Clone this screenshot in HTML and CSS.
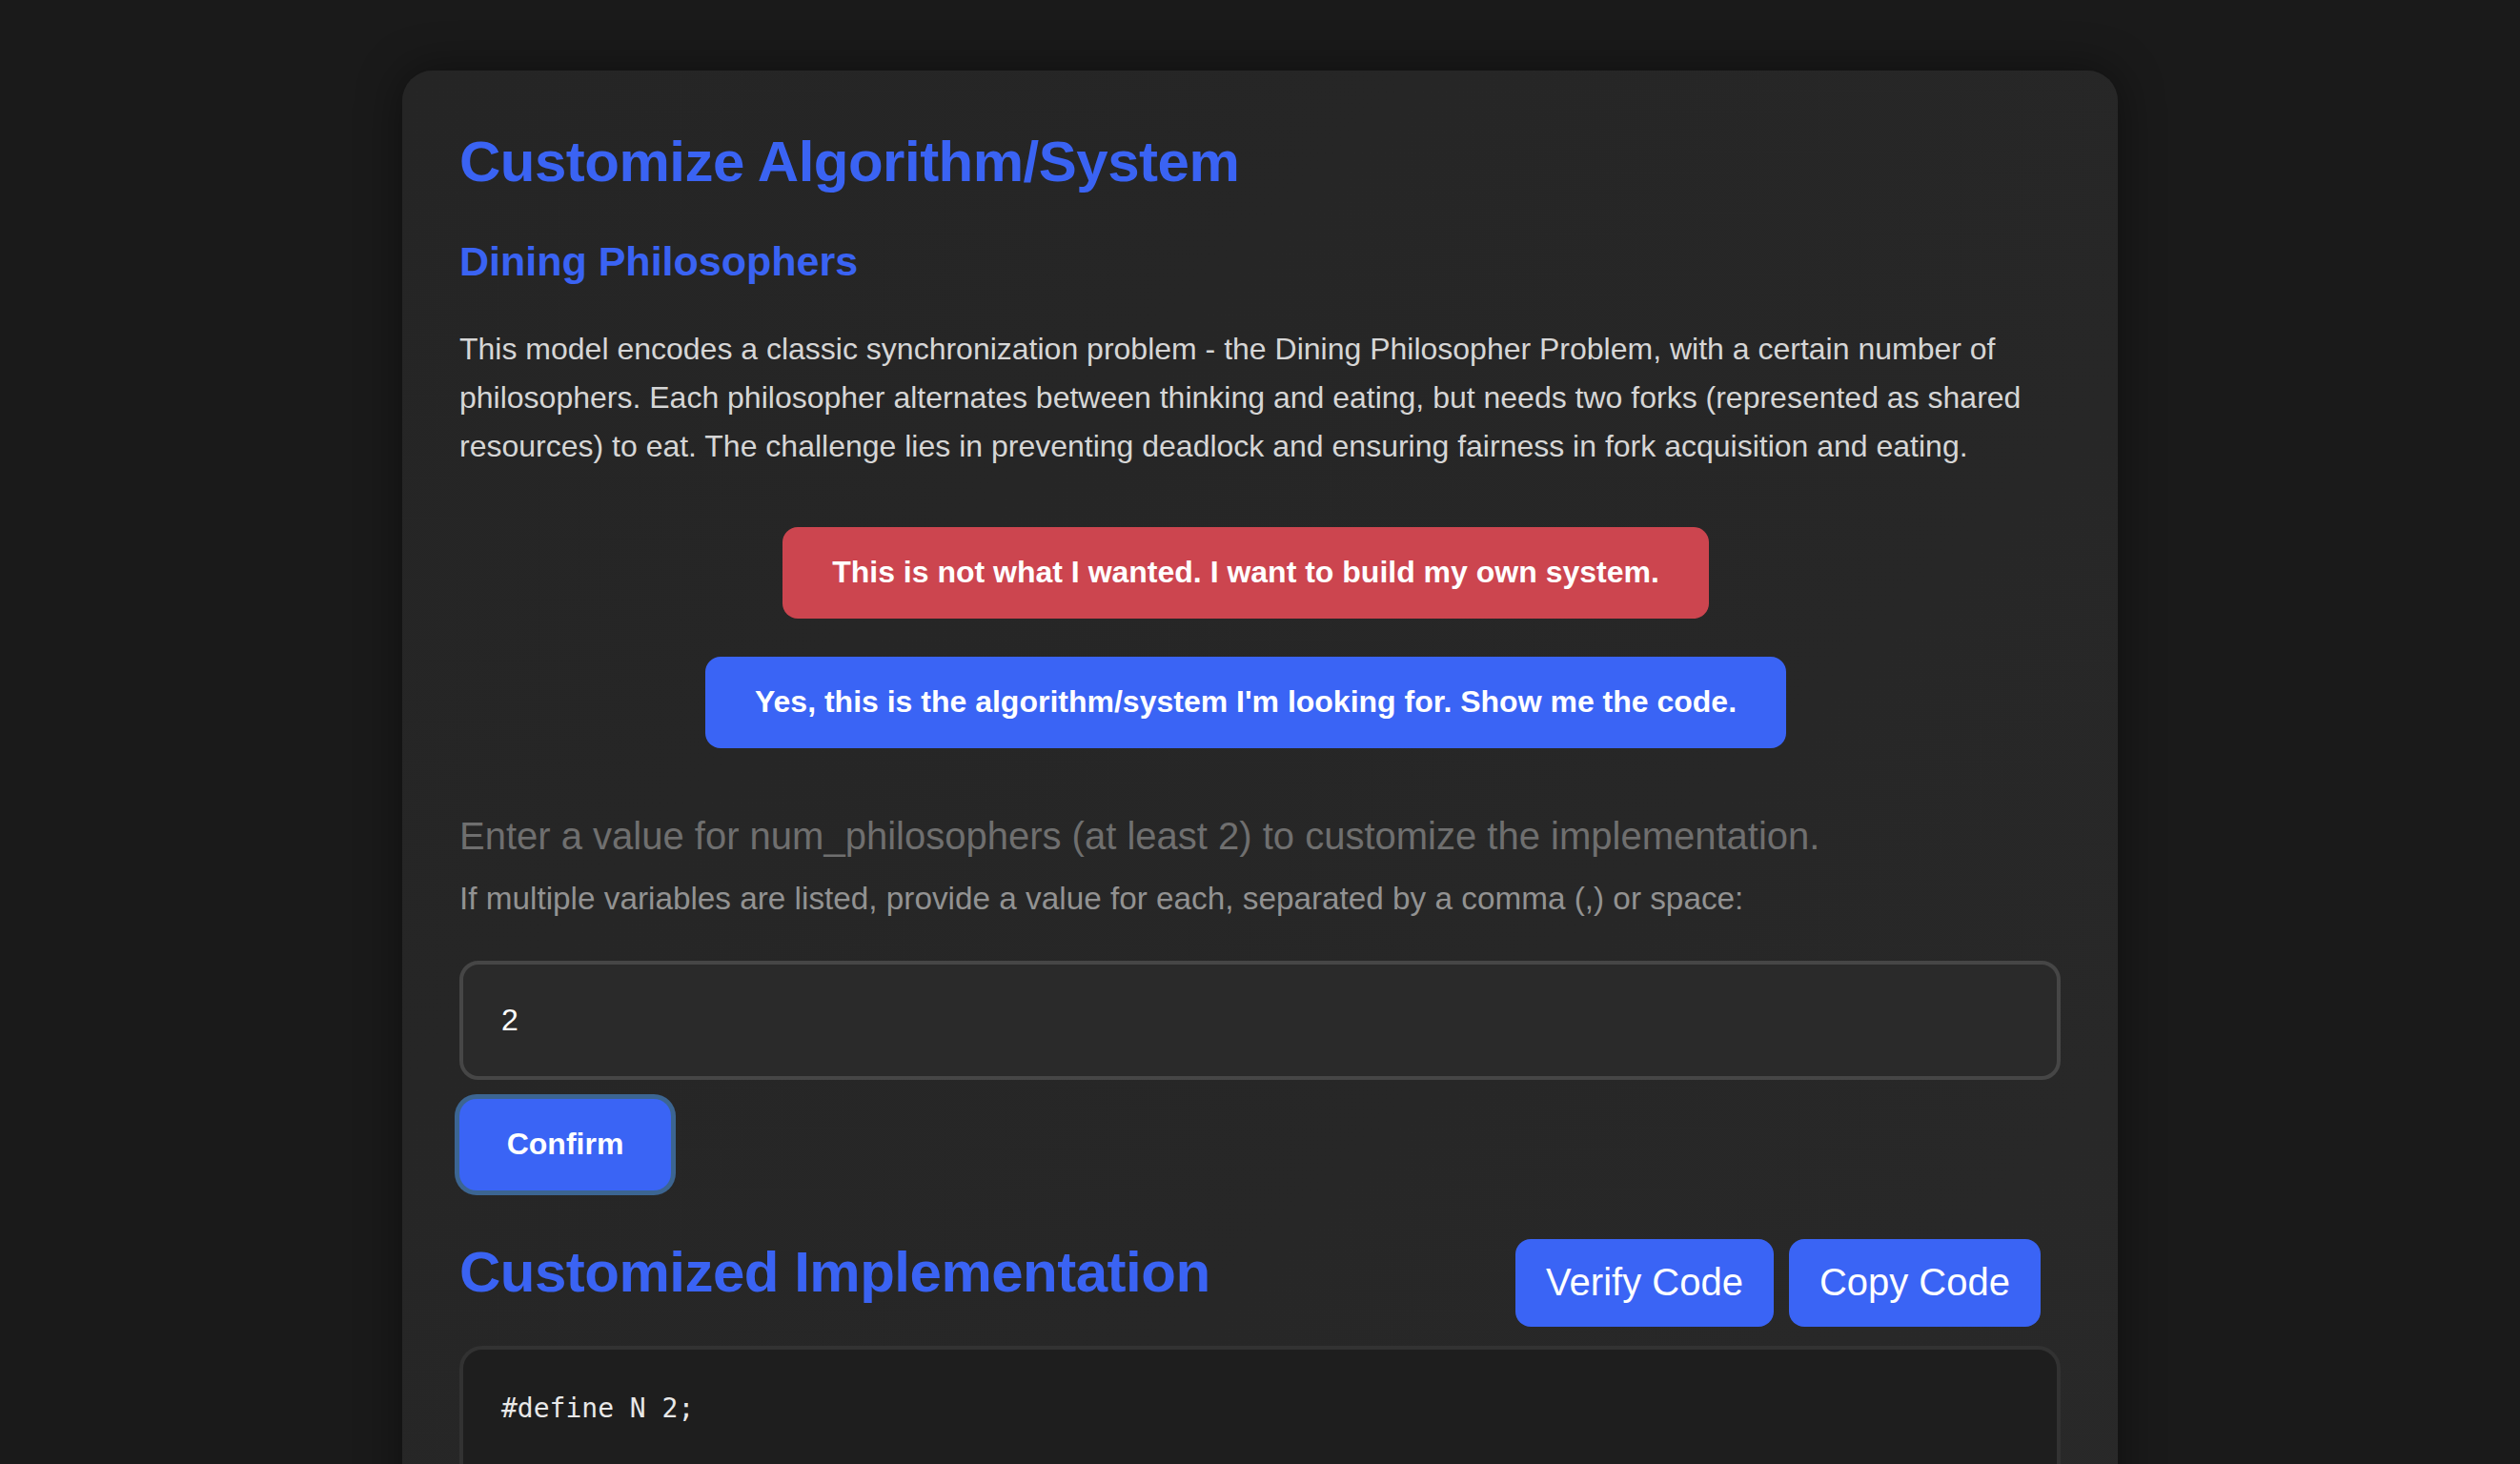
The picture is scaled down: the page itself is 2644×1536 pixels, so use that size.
FILE: index.html
```html
<!DOCTYPE html>
<html lang="en">
<head>
<meta charset="utf-8">
<title>Customize Algorithm/System</title>
<link rel="stylesheet" href="styles.css">
</head>
<body>
<main class="card">
  <h1 class="title">Customize Algorithm/System</h1>
  <h2 class="subtitle">Dining Philosophers</h2>
  <p class="desc">This model encodes a classic synchronization problem - the Dining Philosopher Problem, with a certain number of philosophers. Each philosopher alternates between thinking and eating, but needs two forks (represented as shared resources) to eat. The challenge lies in preventing deadlock and ensuring fairness in fork acquisition and eating.</p>
  <div class="choices">
    <button class="btn btn-red">This is not what I wanted. I want to build my own system.</button>
    <button class="btn btn-blue">Yes, this is the algorithm/system I'm looking for. Show me the code.</button>
  </div>
  <p class="prompt">Enter a value for num_philosophers (at least 2) to customize the implementation.</p>
  <p class="hint">If multiple variables are listed, provide a value for each, separated by a comma (,) or space:</p>
  <input class="value-input" type="text" value="2">
  <div class="confirm-row">
    <button class="btn-confirm">Confirm</button>
  </div>
  <div class="impl-head">
    <h1 class="impl-title">Customized Implementation</h1>
    <div class="impl-actions">
      <button class="btn-action">Verify Code</button>
      <button class="btn-action">Copy Code</button>
    </div>
  </div>
  <pre class="code">#define N 2;

Phil(i) = get.i.(i+1)%N -&gt; get.i.i -&gt; eat.i -&gt; put.i.(i+1)%N -&gt; put.i.i -&gt; Phil(i);

Fork(x) = get.x.x -&gt; put.x.x -&gt; Fork(x) [] get.(x-1)%N.x -&gt; put.(x-1)%N.x -&gt; Fork(x);

College() = ||x:{0..N-1}@(Phil(x)||Fork(x));</pre>
</main>
</body>
</html>
```

FILE: styles.css
```css
* { box-sizing: border-box; }

html, body {
  margin: 0;
  padding: 0;
  background: #1a1a1a;
  font-family: "Liberation Sans", Arial, Helvetica, sans-serif;
  overflow: hidden;
}

.card {
  width: 1800px;
  margin: 74px auto 0;
  padding: 61px 60px 60px;
  border-radius: 32px;
  background: linear-gradient(135deg, #252525 0%, #272727 60%, #292929 100%);
  box-shadow: 0 0 48px rgba(0, 0, 0, 0.45);
}

.title,
.impl-title {
  margin: 0;
  font-size: 60px;
  font-weight: 700;
  letter-spacing: -0.5px;
  line-height: 69px;
  color: #3a63f3;
}

.subtitle {
  margin: 46px 0 0;
  font-size: 43px;
  font-weight: 700;
  line-height: 48px;
  color: #3a63f3;
}

.desc {
  margin: 43px 0 0;
  font-size: 32px;
  line-height: 51.2px;
  color: #d6d6d6;
}

.choices {
  display: flex;
  flex-direction: column;
  align-items: center;
  gap: 40px;
  margin-top: 58px;
  padding-right: 30px;
}

.btn {
  border: none;
  border-radius: 16px;
  padding: 0 52px;
  height: 96px;
  font-family: inherit;
  font-size: 32px;
  font-weight: 700;
  color: #ffffff;
}

.btn-red { background: #cc454f; }
.btn-blue { background: #3a64f5; }

.prompt {
  margin: 69px 0 0;
  font-size: 40px;
  line-height: 46px;
  color: #6f6f6f;
}

.hint {
  margin: 24px 0 0;
  font-size: 33.3px;
  line-height: 37px;
  color: #929292;
}

.value-input {
  display: block;
  width: 100%;
  height: 125px;
  margin-top: 47px;
  padding: 0 40px;
  border: 4px solid #464646;
  border-radius: 20px;
  background: #2a2a2a;
  font-family: "Liberation Sans", Arial, sans-serif;
  font-size: 32px;
  color: #ffffff;
  outline: none;
}

.confirm-row {
  display: flex;
  margin-top: 20px;
}

.btn-confirm {
  width: 222px;
  height: 96px;
  border: none;
  border-radius: 18px;
  background: #3a64f5;
  box-shadow: 0 0 0 5px #3c6592;
  font-family: inherit;
  font-size: 32px;
  font-weight: 700;
  color: #ffffff;
}

.impl-head {
  display: flex;
  justify-content: space-between;
  align-items: flex-start;
  margin-top: 51px;
}

.impl-actions {
  display: flex;
  gap: 16px;
  margin-top: 0;
  margin-right: 21px;
}

.btn-action {
  height: 92px;
  padding: 0 32px;
  border: none;
  border-radius: 16px;
  background: #3a64f5;
  font-family: inherit;
  font-size: 40px;
  color: #ffffff;
}

.code {
  margin: 20px 0 0;
  padding: 41px 40px;
  border: 4px solid #323232;
  border-radius: 24px;
  background: #1e1e1e;
  font-family: "DejaVu Sans Mono", "Liberation Mono", monospace;
  font-size: 28px;
  line-height: 42px;
  color: #e8e8e8;
  white-space: pre-wrap;
}
```
